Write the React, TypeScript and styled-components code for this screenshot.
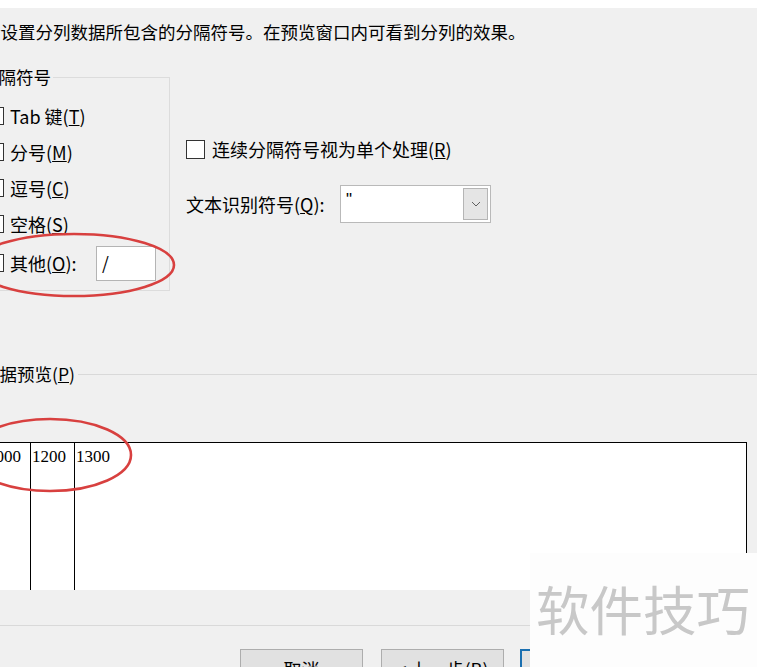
import React from "react";
import styled, { createGlobalStyle } from "styled-components";

const GlobalStyle = createGlobalStyle`
  html, body { margin: 0; padding: 0; background: #f0f0f0; }
  body { font-family: "Noto Sans CJK SC", "Noto Sans", sans-serif; }
`;

const UI_FONT = `"Noto Sans CJK SC", "Noto Sans", sans-serif`;

const Page = styled.div`
  position: relative;
  width: 757px;
  height: 667px;
  overflow: hidden;
  background: #f0f0f0;
  color: #000;
  font-family: ${UI_FONT};
  font-size: 17.5px;
  line-height: 20px;
  display: flex;
  flex-direction: column;
`;

const TopStrip = styled.div`
  height: 8px;
  background: #ffffff;
  flex: none;
`;

const Instruction = styled.div`
  margin: 14px 0 0 -17px;
  height: 20px;
  white-space: nowrap;
  flex: none;
`;

const Options = styled.div`
  display: flex;
  align-items: flex-start;
  margin: 25px 0 0 -30px;
  flex: none;
`;

const GroupBox = styled.fieldset`
  box-sizing: border-box;
  width: 200px;
  margin: 0;
  padding: 11px 0 6px 8px;
  border: 1px solid #dcdcdc;
  min-inline-size: 0;
`;

const Legend = styled.legend`
  padding: 0 2px;
  font-size: 17.5px;
  line-height: 20px;
`;

const CheckRow = styled.label<{ $tall?: boolean }>`
  display: flex;
  align-items: center;
  height: ${(p) => (p.$tall ? 42 : 36)}px;
  margin-left: 7px;
  white-space: nowrap;
  font-size: 18px;
`;

const Box = styled.span<{ $size?: number }>`
  box-sizing: border-box;
  display: inline-block;
  width: ${(p) => p.$size ?? 18}px;
  height: ${(p) => p.$size ?? 18}px;
  border: 1px solid #333333;
  background: #ffffff;
  flex: none;
`;

const LabelText = styled.span<{ $gap?: number; $width?: number }>`
  margin-left: ${(p) => p.$gap ?? 6}px;
  ${(p) => (p.$width ? `width: ${p.$width}px; flex: none;` : "")}
`;

const OtherInput = styled.div`
  box-sizing: border-box;
  width: 60px;
  height: 35px;
  margin-left: 6px;
  border: 1px solid #b4b4b4;
  background: #ffffff;
  padding: 6px 0 0 5px;
  font-size: 17.5px;
  line-height: 20px;
`;

const RightCol = styled.div`
  display: flex;
  flex-direction: column;
  margin-left: 16px;
  padding-top: 72px;
  font-size: 18px;
`;

const PlainRow = styled.div<{ $top?: number }>`
  display: flex;
  align-items: center;
  white-space: nowrap;
  margin-top: ${(p) => p.$top ?? 0}px;
`;

const Select = styled.div`
  box-sizing: border-box;
  display: flex;
  align-items: stretch;
  width: 151px;
  height: 38px;
  border: 1px solid #b9b9b9;
  background: #ffffff;
`;

const SelectValue = styled.div`
  flex: 1;
  padding: 4px 0 0 5px;
  font-family: "Liberation Sans", sans-serif;
  font-size: 17px;
`;

const DropButton = styled.div`
  box-sizing: border-box;
  width: 25px;
  margin: 2px 2px 2px 0;
  background: #e5e5e5;
  border: 1px solid #b5b5b5;
  display: flex;
  align-items: center;
  justify-content: center;
`;

const PreviewHeader = styled.div`
  display: flex;
  align-items: center;
  margin: 73px 0 0 -18px;
  height: 20px;
  flex: none;
`;

const Rule = styled.div`
  flex: 1;
  height: 1px;
  margin-left: 3px;
  background: #d9d9d9;
`;

const PreviewBox = styled.div`
  box-sizing: border-box;
  display: flex;
  flex: none;
  width: 762px;
  height: 148px;
  margin: 58px 0 0 -15px;
  background: #ffffff;
  border: 1px solid #000;
  border-bottom: none;
`;

const Cell = styled.div<{ $w?: number }>`
  ${(p) => (p.$w ? `width: ${p.$w}px; border-right: 1px solid #000;` : "flex: 1;")}
  flex-shrink: 0;
  padding: 4px 0 0 1px;
  font-family: "Liberation Serif", serif;
  font-size: 17px;
  line-height: 20px;
`;

const ScrollBand = styled.div`
  height: 35px;
  flex: none;
  background: #f0f0f0;
  border-bottom: 1px solid #d9d9d9;
`;

const ButtonRow = styled.div`
  display: flex;
  margin: 23px 0 0 240px;
  flex: none;
  font-size: 18px;
`;

const Button = styled.div<{ $primary?: boolean; $gap?: number }>`
  box-sizing: border-box;
  width: 123px;
  height: 40px;
  margin-left: ${(p) => p.$gap ?? 0}px;
  background: #e1e1e1;
  border: ${(p) => (p.$primary ? "2px solid #1a6fb0" : "1px solid #adadad")};
  display: flex;
  align-items: center;
  justify-content: center;
  white-space: nowrap;
  flex: none;
`;

const Annotations = styled.svg`
  position: absolute;
  left: 0;
  top: 0;
  pointer-events: none;
`;

const Watermark = styled.div`
  position: absolute;
  left: 530px;
  top: 553px;
  right: 0;
  bottom: 0;
  background: #fdfdfd;
  display: flex;
  align-items: center;
  padding: 0 0 4px 6px;
  color: #c8c8c8;
  font-family: ${UI_FONT};
  font-size: 53.5px;
  line-height: 60px;
  white-space: nowrap;
`;

const Chevron = () => (
  <svg width="10" height="6" viewBox="0 0 10 6">
    <path d="M1 1 L5 5 L9 1" fill="none" stroke="#606060" strokeWidth="1" />
  </svg>
);

export default function App() {
  const rows: [string, string][] = [
    ["Tab 键(", "T"],
    ["分号(", "M"],
    ["逗号(", "C"],
    ["空格(", "S"],
  ];
  return (
    <>
      <GlobalStyle />
      <Page>
        <TopStrip />
        <Instruction>请设置分列数据所包含的分隔符号。在预览窗口内可看到分列的效果。</Instruction>
        <Options>
          <GroupBox>
            <Legend>分隔符号</Legend>
            {rows.map(([t, k]) => (
              <CheckRow key={k}>
                <Box />
                <LabelText>
                  {t}
                  <u>{k}</u>)
                </LabelText>
              </CheckRow>
            ))}
            <CheckRow $tall>
              <Box />
              <LabelText $width={80}>
                其他(<u>O</u>):
              </LabelText>
              <OtherInput>/</OtherInput>
            </CheckRow>
          </GroupBox>
          <RightCol>
            <PlainRow>
              <Box $size={19} />
              <LabelText $gap={7}>
                连续分隔符号视为单个处理(<u>R</u>)
              </LabelText>
            </PlainRow>
            <PlainRow $top={26}>
              <LabelText $gap={0} $width={154}>
                文本识别符号(<u>Q</u>):
              </LabelText>
              <Select>
                <SelectValue>"</SelectValue>
                <DropButton>
                  <Chevron />
                </DropButton>
              </Select>
            </PlainRow>
          </RightCol>
        </Options>
        <PreviewHeader>
          <span>
            数据预览(<u>P</u>)
          </span>
          <Rule />
        </PreviewHeader>
        <PreviewBox>
          <Cell $w={43}>1000</Cell>
          <Cell $w={42}>1200</Cell>
          <Cell>1300</Cell>
        </PreviewBox>
        <ScrollBand />
        <ButtonRow>
          <Button>取消</Button>
          <Button $gap={18}>&lt; 上一步(<u>B</u>)</Button>
          <Button $gap={16} $primary>
            下一步(<u>N</u>) &gt;
          </Button>
        </ButtonRow>
        <Annotations width="757" height="667" viewBox="0 0 757 667">
          <ellipse cx="74" cy="265" rx="100" ry="31" fill="none" stroke="#d8403f" strokeWidth="2.6" />
          <ellipse cx="50" cy="455" rx="81" ry="36" fill="none" stroke="#d8403f" strokeWidth="2.6" />
        </Annotations>
        <Watermark>软件技巧</Watermark>
      </Page>
    </>
  );
}
